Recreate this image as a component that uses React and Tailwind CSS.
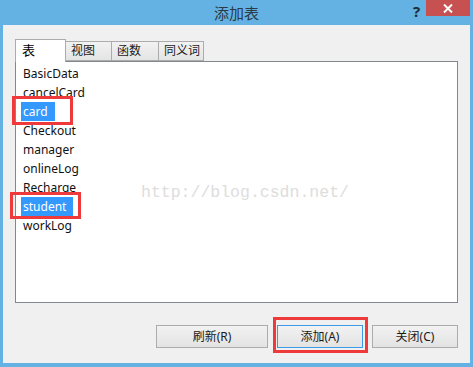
const items = [
  { name: "BasicData" },
  { name: "cancelCard" },
  { name: "card", selected: true },
  { name: "Checkout" },
  { name: "manager" },
  { name: "onlineLog" },
  { name: "Recharge" },
  { name: "student", selected: true },
  { name: "workLog" },
];

const tabs = [
  { label: "表", w: "w-[51px]", active: true },
  { label: "视图", w: "w-[47px]" },
  { label: "函数", w: "w-[48px]" },
  { label: "同义词", w: "w-[46px]" },
];

function Button({ children, w, focused }) {
  return (
    <div
      className={`${w} h-[23px] flex items-center justify-center text-[12px] text-[#1a1a1a] bg-gradient-to-b from-[#f2f2f2] to-[#e3e3e3] border ${
        focused ? "border-[#3c9be8]" : "border-[#acacac]"
      }`}
    >
      {children}
    </div>
  );
}

export default function App() {
  return (
    <div
      className="relative w-[473px] h-[367px] bg-[#63b2e3] flex flex-col px-[3px] pb-[4px] overflow-hidden"
      style={{ fontFamily: '"Noto Sans", "Noto Sans CJK SC", sans-serif' }}
    >
      {/* title bar */}
      <div className="relative h-[25px] flex items-center justify-center">
        <span className="text-[15px] text-[#2b3a44] leading-none" style={{ fontFamily: '"Noto Sans CJK SC", sans-serif' }}>
          添加表
        </span>
        <span className="absolute left-[410px] top-[0px] text-[15px] font-bold text-[#1e2c36]">?</span>
        <div className="absolute left-[423px] top-0 w-[44px] h-[16px] bg-[#c75050] flex items-center justify-center">
          <svg width="10" height="9" viewBox="0 0 10 9">
            <path d="M1 0.5 L9 8.5 M9 0.5 L1 8.5" stroke="white" strokeWidth="2" />
          </svg>
        </div>
      </div>

      {/* client area */}
      <div className="flex-1 bg-[#f0f0f0] flex flex-col pt-[14px] px-[12px] pb-[15px]">
        {/* tabs */}
        <div className="flex h-[22px] items-end relative z-10">
          {tabs.map((t) =>
            t.active ? (
              <div
                key={t.label}
                className={`${t.w} h-[23px] -mb-[1px] bg-white border border-b-0 border-[#acacac] flex items-center pl-[6px] text-[13px] text-black`}
              >
                {t.label}
              </div>
            ) : (
              <div
                key={t.label}
                className={`${t.w} h-[20px] bg-gradient-to-b from-[#f2f2f2] to-[#e4e4e4] border border-[#acacac] -ml-[1px] first:ml-0 flex items-center pl-[5px] text-[12px] text-[#1a1a1a]`}
              >
                {t.label}
              </div>
            )
          )}
        </div>

        {/* list */}
        <div className="relative h-[242px] bg-white border border-[#828790] pt-[2px] pl-[5px]">
          {items.map((it) => (
            <div key={it.name} className="h-[19px] flex items-center">
              <span
                className={`px-[2px] h-[19px] flex items-center text-[12px] ${
                  it.selected ? "bg-[#3399ff] text-white pr-[7px]" : "text-[#111]"
                }`}
              >
                {it.name}
              </span>
            </div>
          ))}
          <span
            className="absolute left-[125px] top-[123px] text-[16.5px] text-[#dddddd] leading-none"
            style={{ fontFamily: '"Liberation Mono", monospace' }}
          >
            http://blog.csdn.net/
          </span>
        </div>

        {/* buttons */}
        <div className="mt-[22px] flex justify-end gap-[9px]">
          <Button w="w-[112px]">刷新(R)</Button>
          <Button w="w-[86px]" focused>
            添加(A)
          </Button>
          <Button w="w-[86px]">关闭(C)</Button>
        </div>
      </div>

      {/* annotation boxes */}
      <div className="absolute left-[12px] top-[96px] w-[61px] h-[29px] border-[3px] border-[#ee3a3a]" />
      <div className="absolute left-[10px] top-[192px] w-[71px] h-[27px] border-[3px] border-[#ee3a3a]" />
      <div className="absolute left-[273px] top-[317px] w-[95px] h-[36px] border-[3px] border-[#ee3a3a]" />
    </div>
  );
}
